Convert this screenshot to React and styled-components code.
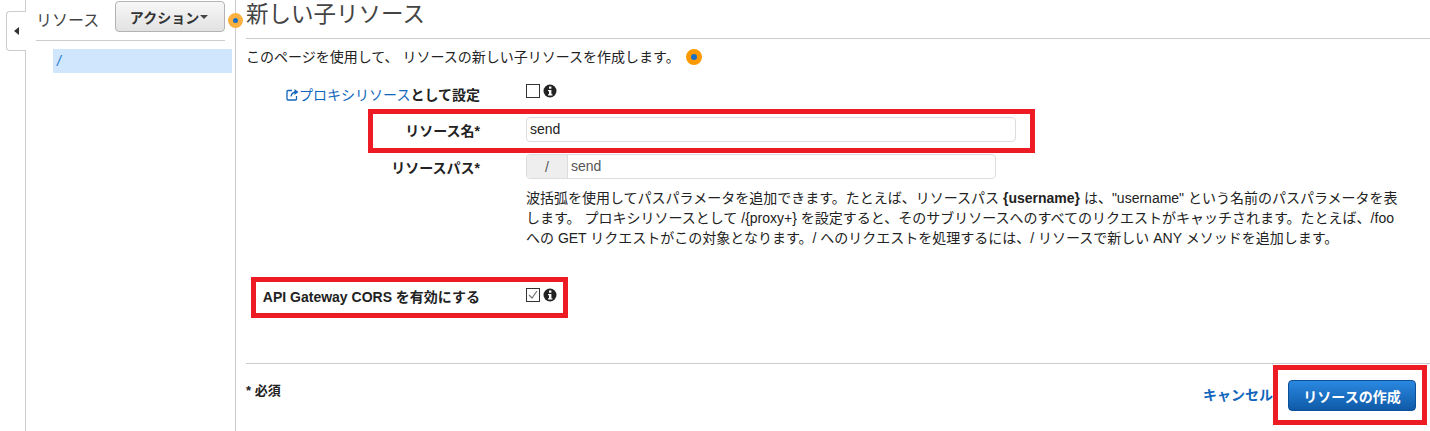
import React from "react";
import styled, { createGlobalStyle } from "styled-components";

const Global = createGlobalStyle`
  html, body {
    margin: 0;
    background: #fff;
  }
  body {
    font-family: "Liberation Sans", "Noto Sans CJK JP", sans-serif;
    font-size: 14px;
    color: #222;
  }
`;

const Page = styled.div`
  position: relative;
  display: flex;
  width: 1430px;
  height: 431px;
  overflow: hidden;
`;

const CollapseColumn = styled.div`
  width: 25px;
  flex: none;
  border-right: 1px solid #ccc;
  padding-top: 11px;
  box-sizing: content-box;
`;

const CollapseTab = styled.div`
  margin-left: 6px;
  margin-right: -1px;
  width: 19px;
  height: 38px;
  background: #fff;
  border: 1px solid #ccc;
  border-right: none;
  border-radius: 4px 0 0 4px;
  display: flex;
  align-items: center;
  justify-content: center;
  position: relative;
`;

const LeftArrow = styled.span`
  width: 0;
  height: 0;
  border-top: 4px solid transparent;
  border-bottom: 4px solid transparent;
  border-right: 5px solid #333;
`;

const Sidebar = styled.aside`
  width: 210px;
  flex: none;
  border-right: 1px solid #ccc;
  padding-left: 10px;
  box-sizing: border-box;
  position: relative;
`;

const SidebarHeader = styled.div`
  width: 189px;
  height: 41px;
  box-sizing: border-box;
  border-bottom: 1px solid #ccc;
  display: flex;
  justify-content: space-between;
  align-items: flex-start;
  padding-top: 1px;
`;

const SidebarTitle = styled.span`
  font-size: 16px;
  line-height: 20px;
  color: #444;
  margin-top: 10px;
`;

const ActionButton = styled.button`
  width: 110px;
  height: 31px;
  box-sizing: border-box;
  border: 1px solid #b3b3b3;
  border-radius: 4px;
  background: linear-gradient(#f7f7f7, #e2e2e2);
  font: bold 14px "Liberation Sans", "Noto Sans CJK JP", sans-serif;
  color: #333;
  padding: 0 2px 0 0;
  display: flex;
  align-items: center;
  justify-content: center;
  gap: 1px;
`;

const Caret = styled.span`
  width: 0;
  height: 0;
  border-left: 4px solid transparent;
  border-right: 4px solid transparent;
  border-top: 4px solid #444;
`;

const TreeItem = styled.div`
  margin: 8px 3px 0 17px;
  height: 24px;
  background: #d0e6fd;
  color: #2277cc;
  font-style: italic;
  line-height: 24px;
  padding-left: 4px;
`;

const Dot = styled.span`
  display: inline-block;
  flex: none;
  width: 16px;
  height: 16px;
  border-radius: 50%;
  background: #1a6fc4;
  border: 5px solid #f90;
  box-sizing: border-box;
`;

const SideDot = styled(Dot)`
  position: absolute;
  left: 202px;
  top: 13px;
  width: 15px;
  height: 15px;
  border-color: #fbb040;
`;

const Main = styled.main`
  flex: 1;
  min-width: 0;
  padding-left: 10px;
`;

const Title = styled.h1`
  margin: 0;
  height: 39px;
  box-sizing: border-box;
  border-bottom: 1px solid #ccc;
  font-size: 22.5px;
  font-weight: normal;
  line-height: 30px;
  color: #444;
`;

const Intro = styled.p`
  margin: 0;
  height: 36px;
  line-height: 20px;
  display: flex;
  align-items: center;
  gap: 6px;
  color: #222;
`;

const FormRow = styled.div`
  display: grid;
  grid-template-columns: 234px 1fr;
  column-gap: 46px;
  align-items: ${({ $top }) => ($top ? "start" : "center")};
  height: ${({ $h }) => $h}px;
  padding-top: ${({ $top }) => ($top ? 1 : 0)}px;
  box-sizing: border-box;
`;

const Label = styled.label`
  font-weight: bold;
  font-size: 14px;
  text-align: right;
  color: #222;
`;

const ProxyLink = styled.a`
  color: #1166bb;
  font-weight: normal;
`;

const InfoBox = styled.span`
  display: inline-flex;
  align-items: center;
  gap: 3px;
  margin-bottom: ${({ $lift }) => $lift}px;
`;

const Box = styled.span`
  width: 12px;
  height: 12px;
  border: 1px solid #333;
  display: inline-flex;
  align-items: center;
  justify-content: center;
`;

const TextInput = styled.div`
  width: ${({ $w }) => $w}px;
  height: 25px;
  box-sizing: border-box;
  border: 1px solid #ddd;
  border-radius: 4px;
  display: flex;
  align-items: center;
  color: #222;
  overflow: hidden;
`;

const InputValue = styled.span`
  padding-left: 3px;
  margin-bottom: 1px;
  color: ${({ $muted }) => ($muted ? "#555" : "#222")};
`;

const Prefix = styled.span`
  width: 40px;
  height: 100%;
  flex: none;
  background: #eee;
  border-right: 1px solid #ddd;
  display: flex;
  align-items: center;
  justify-content: center;
  color: #555;
`;

const Help = styled.p`
  margin: 0;
  grid-column: 2;
  width: 880px;
  line-height: 20px;
  font-size: 14px;
  color: #222;
`;

const Footer = styled.div`
  margin-top: 48px;
  border-top: 1px solid #ccc;
  display: flex;
  justify-content: space-between;
  align-items: flex-start;
  height: 67px;
`;

const Required = styled.span`
  font-weight: bold;
  font-size: 13px;
  margin-top: 16px;
`;

const FooterActions = styled.div`
  display: flex;
  align-items: center;
  gap: 15px;
  padding: 16px 14px 0 0;
`;

const CancelLink = styled.a`
  color: #1166bb;
  font-weight: bold;
  font-size: 14px;
  margin-bottom: 3px;
`;

const PrimaryButton = styled.button`
  width: 128px;
  height: 31px;
  border: 1px solid #0b4f96;
  border-radius: 4px;
  background: linear-gradient(#2a88e0, #0f5aa8);
  color: #fff;
  font: bold 14px "Liberation Sans", "Noto Sans CJK JP", sans-serif;
  padding: 0;
`;

const Callout = styled.div`
  position: absolute;
  box-sizing: border-box;
  border: 5px solid #ed1c24;
  left: ${({ $x }) => $x}px;
  top: ${({ $y }) => $y}px;
  width: ${({ $w }) => $w}px;
  height: ${({ $h }) => $h}px;
`;

const Info = () => (
  <svg width="14" height="14" viewBox="0 0 14 14">
    <circle cx="7" cy="7" r="6.5" fill="#222" />
    <rect x="6" y="2.5" width="2.4" height="2.2" fill="#fff" />
    <path d="M5 6h3.4v4.2h1V11.500H5v-1.300h1V7.300H5z" fill="#fff" />
  </svg>
);

const ExternalIcon = () => (
  <svg width="13" height="13" viewBox="0 0 13 13" fill="none" stroke="#1166bb" strokeWidth="1.300" style={{ verticalAlign: "-1px" }}>
    <path d="M6 2.500H2a1 1 0 0 0-1 1V11a1 1 0 0 0 1 1h7.500a1 1 0 0 0 1-1V8" />
    <path d="M5 8.500C5.500 5.500 7.500 4 10.500 4" />
    <path d="M8.500 1l4 3-4 3z" fill="#1166bb" stroke="none" />
  </svg>
);

export default function App() {
  return (
    <>
      <Global />
      <Page>
        <CollapseColumn>
          <CollapseTab>
            <LeftArrow />
          </CollapseTab>
        </CollapseColumn>
        <Sidebar>
          <SidebarHeader>
            <SidebarTitle>リソース</SidebarTitle>
            <ActionButton>
              アクション
              <Caret />
            </ActionButton>
          </SidebarHeader>
          <TreeItem>/</TreeItem>
          <SideDot />
        </Sidebar>
        <Main>
          <Title>新しい子リソース</Title>
          <Intro>
            このページを使用して、 リソースの新しい子リソースを作成します。
            <Dot />
          </Intro>
          <FormRow $h={38}>
            <Label>
              <ProxyLink>
                <ExternalIcon />
                プロキシリソース
              </ProxyLink>
              として設定
            </Label>
            <InfoBox $lift={6}>
              <Box />
              <Info />
            </InfoBox>
          </FormRow>
          <FormRow $h={33}>
            <Label>リソース名*</Label>
            <TextInput $w={490}>
              <InputValue>send</InputValue>
            </TextInput>
          </FormRow>
          <FormRow $h={41}>
            <Label>リソースパス*</Label>
            <TextInput $w={470}>
              <Prefix>/</Prefix>
              <InputValue $muted>send</InputValue>
            </TextInput>
          </FormRow>
          <FormRow $top $h={90}>
            <span />
            <Help>
              波括弧を使用してパスパラメータを追加できます。たとえば、リソースパス <b>{"{username}"}</b> は、"username" という名前のパスパラメータを表します。 プロキシリソースとして /{"{proxy+}"} を設定すると、そのサブリソースへのすべてのリクエストがキャッチされます。たとえば、/foo への GET リクエストがこの対象となります。/ へのリクエストを処理するには、/ リソースで新しい ANY メソッドを追加します。
            </Help>
          </FormRow>
          <FormRow $h={38}>
            <Label>API Gateway CORS を有効にする</Label>
            <InfoBox $lift={2}>
              <Box>
                <svg width="10" height="10" viewBox="0 0 10 10" fill="none" stroke="#777" strokeWidth="1.200">
                  <path d="M1 5l3 3 5-7" />
                </svg>
              </Box>
              <Info />
            </InfoBox>
          </FormRow>
          <Footer>
            <Required>* 必須</Required>
            <FooterActions>
              <CancelLink>キャンセル</CancelLink>
              <PrimaryButton>リソースの作成</PrimaryButton>
            </FooterActions>
          </Footer>
        </Main>
        <Callout $x={368} $y={109} $w={667} $h={44} />
        <Callout $x={251} $y={277} $w={317} $h={41} />
        <Callout $x={1273} $y={365} $w={154} $h={60} />
      </Page>
    </>
  );
}
